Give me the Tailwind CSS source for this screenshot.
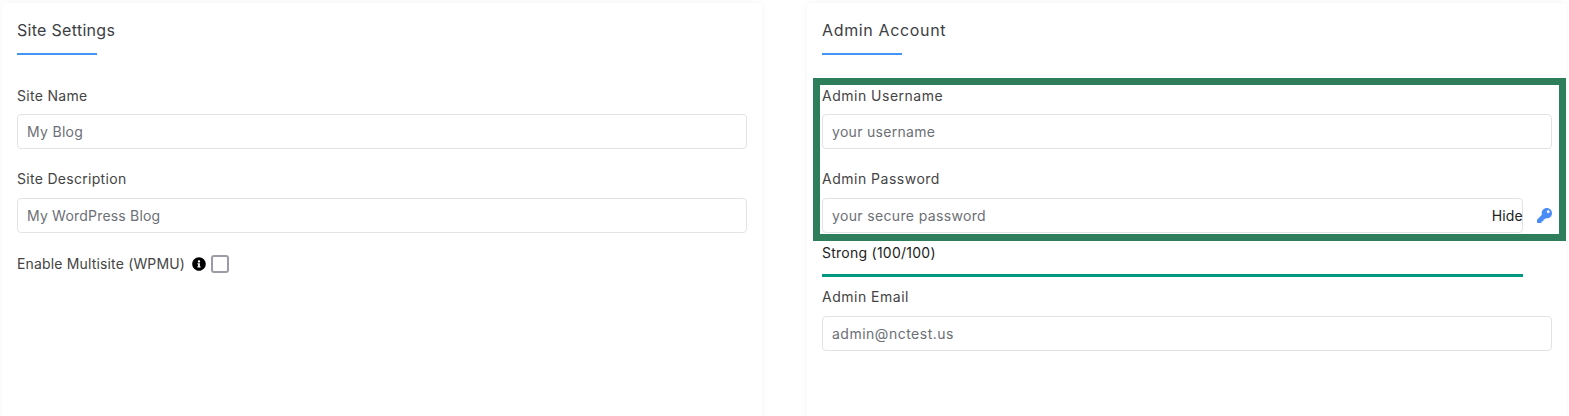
<!DOCTYPE html>
<html lang="en">
<head>
  <meta charset="UTF-8" />
  <title>Install settings</title>
  <script src="https://cdn.jsdelivr.net/npm/@tailwindcss/browser@4"></script>
</head>
<body class="bg-white font-['Inter',sans-serif] text-[14px] text-[#444] tracking-[0.3px] overflow-hidden">
  <div class="h-[416px] w-[1569px] overflow-hidden flex gap-[45px] pl-[2px] pt-[3px]">

    <!-- site settings -->
    <div class="w-[760px] h-[440px] shrink-0 bg-white rounded-[4px] shadow-[0_0_8px_rgba(0,0,0,0.05)] px-[15px] pt-[17px]">
      <h2 class="text-[16px] leading-[20px] text-[#3c4043]">Site Settings</h2>
      <div class="w-[80px] h-[2px] bg-[#4394f5] mt-[13px] mb-[31px]"></div>

      <label class="block leading-[20px] h-[20px]">Site Name</label>
      <input class="block w-full h-[35px] mt-[8px] pl-[9px] pr-[9px] border border-[#e3e3e3] rounded-[4px] text-[#6c6f76] tracking-[0.3px]" value="My Blog" />

      <label class="block leading-[20px] h-[20px] mt-[20px]">Site Description</label>
      <input class="block w-full h-[35px] mt-[9px] pl-[9px] pr-[9px] border border-[#e3e3e3] rounded-[4px] text-[#6c6f76] tracking-[0.2px]" value="My WordPress Blog" />

      <div class="flex items-center h-[18px] mt-[22px]">
        <span class="leading-[20px] tracking-[0.16px]">Enable Multisite (WPMU)</span>
        <svg class="w-[14px] h-[14px] ml-[7px] text-black" viewBox="0 0 512 512" fill="currentColor"><path d="M256 8C119.043 8 8 119.083 8 256c0 136.997 111.043 248 248 248s248-111.003 248-248C504 119.083 392.957 8 256 8zm0 110c23.196 0 42 18.804 42 42s-18.804 42-42 42-42-18.804-42-42 18.804-42 42-42zm56 254c0 6.627-5.373 12-12 12h-88c-6.627 0-12-5.373-12-12v-24c0-6.627 5.373-12 12-12h12v-64h-12c-6.627 0-12-5.373-12-12v-24c0-6.627 5.373-12 12-12h64c6.627 0 12 5.373 12 12v100h12c6.627 0 12 5.373 12 12v24z"/></svg>
        <span class="w-[18px] h-[18px] ml-[5px] border-2 border-[#9b9ba6] rounded-[3px] bg-white"></span>
      </div>
    </div>

    <!-- admin account -->
    <div class="relative w-[760px] h-[440px] shrink-0 bg-white rounded-[4px] shadow-[0_0_8px_rgba(0,0,0,0.05)] pl-[15px] pr-[15px] pt-[17px]">
      <h2 class="text-[16px] leading-[20px] text-[#3c4043] tracking-[0.65px]">Admin Account</h2>
      <div class="w-[80px] h-[2px] bg-[#4394f5] mt-[13px] mb-[31px]"></div>

      <label class="block leading-[20px] h-[20px] tracking-[0.5px]">Admin Username</label>
      <input class="block w-full h-[35px] mt-[8px] pl-[9px] pr-[9px] border border-[#e3e3e3] rounded-[4px] text-[#6c6f76] tracking-[0.3px]" value="your username" />

      <label class="block leading-[20px] h-[20px] mt-[20px] tracking-[0.5px]">Admin Password</label>
      <div class="flex items-center mt-[9px]">
        <div class="relative w-[701px] shrink-0">
          <input class="block w-full h-[35px] pl-[9px] pr-[9px] border border-[#e3e3e3] rounded-[4px] text-[#6c6f76] tracking-[0.35px]" value="your secure password" />
          <span class="absolute right-0 top-[8px] leading-[20px] text-[#222] tracking-[0.2px]">Hide</span>
        </div>
        <svg class="w-[15px] h-[15px] ml-[14px] mb-[1px] text-[#4a8cf7]" viewBox="0 0 512 512" fill="currentColor"><path d="M512 176.001C512 273.203 433.202 352 336 352c-11.22 0-22.19-1.062-32.827-3.069l-24.012 27.014A23.999 23.999 0 0 1 261.223 384H224v40c0 13.255-10.745 24-24 24h-40v40c0 13.255-10.745 24-24 24H24c-13.255 0-24-10.745-24-24v-78.059c0-6.365 2.529-12.47 7.029-16.971l161.802-161.802C163.108 213.814 160 195.271 160 176 160 78.798 238.797.001 335.999 0 433.488-.001 512 78.511 512 176.001zM336 128c0 26.51 21.49 48 48 48s48-21.49 48-48-21.49-48-48-48-48 21.49-48 48z"/></svg>
      </div>

      <div class="leading-[20px] mt-[10px] text-[#222] tracking-[0.25px]">Strong (100/100)</div>
      <div class="w-[701px] h-[3px] bg-[#009883] mt-[11px]"></div>

      <label class="block leading-[20px] h-[20px] mt-[10px] tracking-[0.5px]">Admin Email</label>
      <input class="block w-full h-[35px] mt-[9px] pl-[9px] pr-[9px] border border-[#e3e3e3] rounded-[4px] text-[#6c6f76] tracking-[0.5px]" value="admin@nctest.us" />

      <!-- annotation box drawn over the screenshot -->
      <div class="absolute left-[6px] top-[75px] w-[753px] h-[163px] border-[7px] border-[#2e7d5b] pointer-events-none"></div>
    </div>
  </div>
</body>
</html>
